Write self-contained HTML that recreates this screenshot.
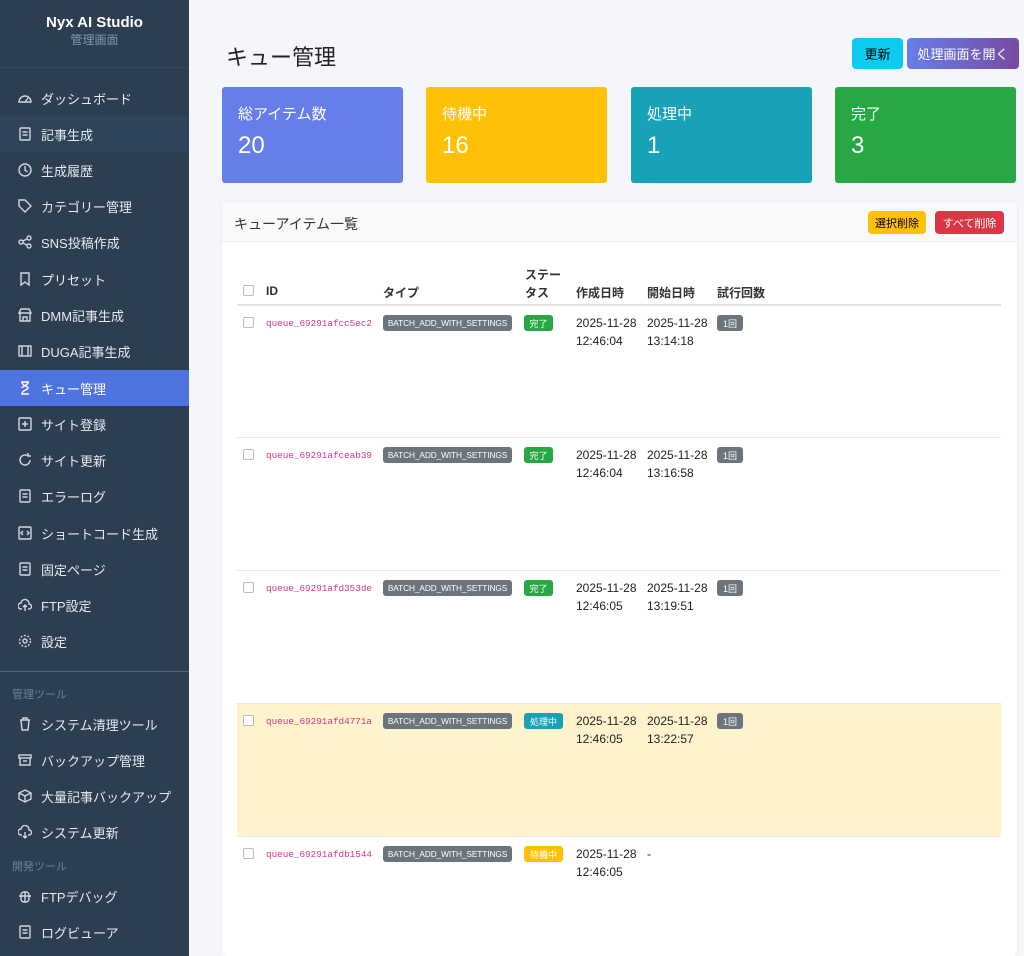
<!DOCTYPE html>
<html><head><meta charset="utf-8"><style>
*{box-sizing:border-box;margin:0;padding:0}
html,body{width:1024px;height:956px;overflow:hidden}
body{background:#f5f6fa;font-family:"Liberation Sans","Noto Sans CJK JP",sans-serif;position:relative}
.sb{position:absolute;left:0;top:0;width:189px;height:956px;background:#2c3e50;color:#e6ebf0}
.brand{height:68px;border-bottom:1px solid #34495e;text-align:center;padding-top:14px}
.brand b{font-size:15px;color:#fff;display:block}
.brand span{font-size:12px;color:#8596a6}
.it{position:absolute;left:0;width:189px;height:36px;display:flex;align-items:center;padding-left:18px;font-size:13px;color:#e6ebf0}
.it svg{width:14px;height:14px;margin-right:9px;stroke:#d0d7de;fill:none;stroke-width:1.4}
.it.act{background:#4e73df;color:#fff}
.it.hov{background:#2f4458}
.sec{position:absolute;left:12px;font-size:11px;color:#6f8091}
.main{position:absolute;left:189px;top:0;right:0;height:956px;overflow:hidden}
h1{position:absolute;left:37px;top:40px;font-size:22px;font-weight:normal;color:#222}
.btn{position:absolute;top:38px;height:31px;border-radius:4px;font-size:13px;display:flex;align-items:center;justify-content:center}
.stat{position:absolute;top:87px;width:181px;height:96px;border-radius:3px;color:#fff;padding:16px}
.stat p{font-size:15px}
.stat div{font-size:24px;margin-top:8px}
.card{position:absolute;left:33px;top:202px;width:795px;height:754px;background:#fff;border-radius:4px;box-shadow:0 0 2px rgba(0,0,0,.1)}
.ch{height:40px;background:#f8f9fa;border-bottom:1px solid #eee;font-size:14px;color:#333;padding:12px}
.sb2{position:absolute;top:9px;height:23px;border-radius:4px;font-size:11px;display:flex;align-items:center;justify-content:center}
.th{position:absolute;font-size:12px;font-weight:bold;color:#333}
.cb{position:absolute;width:11px;height:11px;border:1px solid #bbb;border-radius:2px;background:#fff}
.row{position:absolute;left:15px;width:764px;height:133px;border-top:1px solid #e6e6e6}
.row .id{position:absolute;left:29px;top:12px;font-family:"Liberation Mono",monospace;font-size:9.3px;color:#d63384}
.tag{position:absolute;top:9px;height:16px;border-radius:3px;font-size:9px;color:#fff;display:flex;align-items:center;justify-content:center;white-space:nowrap;overflow:hidden}
.tag.b{font-size:8.3px;letter-spacing:-0.1px}
.d{position:absolute;top:8px;font-size:12px;color:#222;line-height:18px}
</style></head><body>
<div class="sb">
<div class="brand"><b>Nyx AI Studio</b><span>管理画面</span></div>
<div class="it" style="top:80px"><svg viewBox="0 0 14 14"><path d="M1 11a6 6 0 0 1 12 0z M7 11l3-4"/></svg>ダッシュボード</div>
<div class="it hov" style="top:116px"><svg viewBox="0 0 14 14"><rect x="2" y="1" width="10" height="12" rx="1"/><path d="M4.5 5h5M4.5 8h5"/></svg>記事生成</div>
<div class="it" style="top:152px"><svg viewBox="0 0 14 14"><circle cx="7" cy="7" r="6"/><path d="M7 3v4l2.5 2"/></svg>生成履歴</div>
<div class="it" style="top:188px"><svg viewBox="0 0 14 14"><path d="M1 1h6l6 6-6 6-6-6z"/></svg>カテゴリー管理</div>
<div class="it" style="top:224px"><svg viewBox="0 0 14 14"><circle cx="3" cy="7" r="2"/><circle cx="11" cy="3" r="2"/><circle cx="11" cy="11" r="2"/><path d="M5 6l4-2M5 8l4 2"/></svg>SNS投稿作成</div>
<div class="it" style="top:261px"><svg viewBox="0 0 14 14"><path d="M3 1h8v12l-4-3-4 3z"/></svg>プリセット</div>
<div class="it" style="top:297px"><svg viewBox="0 0 14 14"><path d="M1 5l2-4h8l2 4zM2 5v8h10V5M5 13V9h4v4"/></svg>DMM記事生成</div>
<div class="it" style="top:333px"><svg viewBox="0 0 14 14"><rect x="1" y="2" width="12" height="10"/><path d="M4 2v10M10 2v10"/></svg>DUGA記事生成</div>
<div class="it act" style="top:370px"><svg viewBox="0 0 14 14" style="stroke:#fff"><path d="M3 1h8M3 13h8M4 1c0 4 6 4 6 6s-6 2-6 6M10 1c0 4-6 4-6 6"/></svg>キュー管理</div>
<div class="it" style="top:406px"><svg viewBox="0 0 14 14"><rect x="1" y="1" width="12" height="12" rx="1"/><path d="M7 4v6M4 7h6"/></svg>サイト登録</div>
<div class="it" style="top:442px"><svg viewBox="0 0 14 14"><path d="M12 7a5 5 0 1 1-2-4M10 0v3h3"/></svg>サイト更新</div>
<div class="it" style="top:478px"><svg viewBox="0 0 14 14"><rect x="2" y="1" width="10" height="12" rx="1"/><path d="M4.5 5h5M4.5 8h5"/></svg>エラーログ</div>
<div class="it" style="top:515px"><svg viewBox="0 0 14 14"><rect x="1" y="1" width="12" height="12" rx="1"/><path d="M5 5l-2 2 2 2M9 5l2 2-2 2"/></svg>ショートコード生成</div>
<div class="it" style="top:551px"><svg viewBox="0 0 14 14"><rect x="2" y="1" width="10" height="12" rx="1"/><path d="M4.5 5h5M4.5 8h5"/></svg>固定ページ</div>
<div class="it" style="top:587px"><svg viewBox="0 0 14 14"><path d="M4 11H3a3 3 0 0 1 0-6 4 4 0 0 1 8 1 2.5 2.5 0 0 1 0 5h-1M7 13V7M5 9l2-2 2 2"/></svg>FTP設定</div>
<div class="it" style="top:623px"><svg viewBox="0 0 14 14"><circle cx="7" cy="7" r="2"/><circle cx="7" cy="7" r="5.5" stroke-dasharray="2 1.5"/></svg>設定</div>
<div style="position:absolute;top:671px;left:0;width:189px;height:1px;background:#51667a"></div>
<div class="sec" style="top:686px">管理ツール</div>
<div class="it" style="top:706px"><svg viewBox="0 0 14 14"><path d="M2 3h10M5 3V1h4v2M3 3l1 10h6l1-10"/></svg>システム清理ツール</div>
<div class="it" style="top:742px"><svg viewBox="0 0 14 14"><rect x="1" y="2" width="12" height="3"/><path d="M2 5v7h10V5M5 8h4"/></svg>バックアップ管理</div>
<div class="it" style="top:778px"><svg viewBox="0 0 14 14"><path d="M7 1l6 3v6l-6 3-6-3V4zM1 4l6 3 6-3M7 7v6"/></svg>大量記事バックアップ</div>
<div class="it" style="top:814px"><svg viewBox="0 0 14 14"><path d="M4 10H3a3 3 0 0 1 0-6 4 4 0 0 1 8 1 2.5 2.5 0 0 1 0 5h-1M7 7v6M5 11l2 2 2-2"/></svg>システム更新</div>
<div class="sec" style="top:858px">開発ツール</div>
<div class="it" style="top:878px"><svg viewBox="0 0 14 14"><rect x="3" y="3" width="8" height="10" rx="3"/><path d="M1 7h12M7 3v10"/></svg>FTPデバッグ</div>
<div class="it" style="top:914px"><svg viewBox="0 0 14 14"><rect x="2" y="1" width="10" height="12" rx="1"/><path d="M4.5 5h5M4.5 8h5"/></svg>ログビューア</div>
</div>
<div class="main">
<h1>キュー管理</h1>
<div class="btn" style="left:663px;width:51px;background:#0dcaf0;color:#000">更新</div>
<div class="btn" style="left:718px;width:112px;background:linear-gradient(90deg,#667eea,#764ba2);color:#fff">処理画面を開く</div>
<div class="stat" style="left:33px;background:#667eea"><p>総アイテム数</p><div>20</div></div>
<div class="stat" style="left:237px;background:#ffc107"><p>待機中</p><div>16</div></div>
<div class="stat" style="left:442px;background:#17a2b8"><p>処理中</p><div>1</div></div>
<div class="stat" style="left:646px;background:#28a745"><p>完了</p><div>3</div></div>
<div class="card">
<div class="ch">キューアイテム一覧</div>
<div class="sb2" style="left:646px;width:58px;background:#ffc107;color:#000">選択削除</div>
<div class="sb2" style="left:713px;width:69px;background:#dc3545;color:#fff">すべて削除</div>
<div class="cb" style="left:21px;top:83px"></div>
<div class="th" style="left:44px;top:82px">ID</div>
<div class="th" style="left:161px;top:82px">タイプ</div>
<div class="th" style="left:303px;top:64px;line-height:18px">ステー<br>タス</div>
<div class="th" style="left:354px;top:82px">作成日時</div>
<div class="th" style="left:425px;top:82px">開始日時</div>
<div class="th" style="left:495px;top:82px">試行回数</div>
<div style="position:absolute;left:15px;top:102px;width:764px;height:2px;background:#dee2e6"></div>

<div class="row" style="top:103px"><div class="cb" style="left:6px;top:11px"></div><div class="id">queue_69291afcc5ec2</div><div class="tag b" style="left:146px;width:129px;background:#6c757d">BATCH_ADD_WITH_SETTINGS</div><div class="tag" style="left:287px;width:29px;background:#28a745">完了</div><div class="d" style="left:339px">2025-11-28<br>12:46:04</div><div class="d" style="left:410px">2025-11-28<br>13:14:18</div><div class="tag" style="left:480px;width:26px;background:#6c757d">1回</div></div>
<div class="row" style="top:235px"><div class="cb" style="left:6px;top:11px"></div><div class="id">queue_69291afceab39</div><div class="tag b" style="left:146px;width:129px;background:#6c757d">BATCH_ADD_WITH_SETTINGS</div><div class="tag" style="left:287px;width:29px;background:#28a745">完了</div><div class="d" style="left:339px">2025-11-28<br>12:46:04</div><div class="d" style="left:410px">2025-11-28<br>13:16:58</div><div class="tag" style="left:480px;width:26px;background:#6c757d">1回</div></div>
<div class="row" style="top:368px"><div class="cb" style="left:6px;top:11px"></div><div class="id">queue_69291afd353de</div><div class="tag b" style="left:146px;width:129px;background:#6c757d">BATCH_ADD_WITH_SETTINGS</div><div class="tag" style="left:287px;width:29px;background:#28a745">完了</div><div class="d" style="left:339px">2025-11-28<br>12:46:05</div><div class="d" style="left:410px">2025-11-28<br>13:19:51</div><div class="tag" style="left:480px;width:26px;background:#6c757d">1回</div></div>
<div class="row" style="top:501px;background:#fff3cd"><div class="cb" style="left:6px;top:11px"></div><div class="id">queue_69291afd4771a</div><div class="tag b" style="left:146px;width:129px;background:#6c757d">BATCH_ADD_WITH_SETTINGS</div><div class="tag" style="left:287px;width:39px;background:#17a2b8">処理中</div><div class="d" style="left:339px">2025-11-28<br>12:46:05</div><div class="d" style="left:410px">2025-11-28<br>13:22:57</div><div class="tag" style="left:480px;width:26px;background:#6c757d">1回</div></div>
<div class="row" style="top:634px"><div class="cb" style="left:6px;top:11px"></div><div class="id">queue_69291afdb1544</div><div class="tag b" style="left:146px;width:129px;background:#6c757d">BATCH_ADD_WITH_SETTINGS</div><div class="tag" style="left:287px;width:39px;background:#ffc107">待機中</div><div class="d" style="left:339px">2025-11-28<br>12:46:05</div><div class="d" style="left:410px">-</div></div>
</div>
</div>
</body></html>
